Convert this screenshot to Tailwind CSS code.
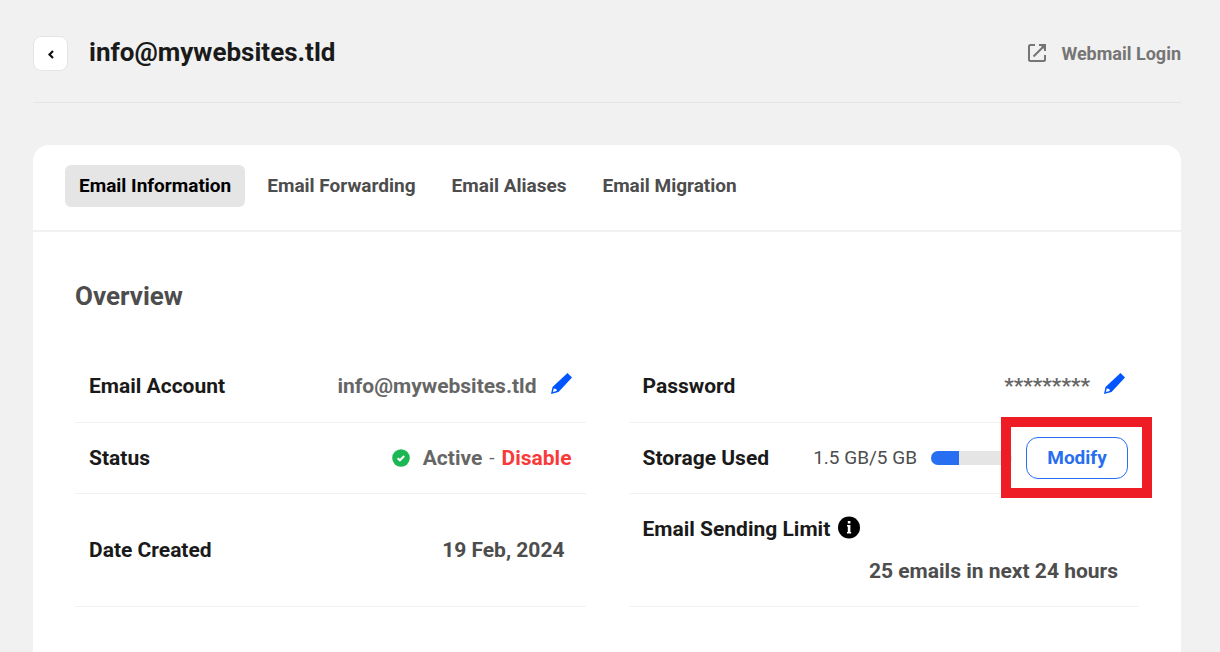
<!DOCTYPE html>
<html lang="en">
<head>
  <meta charset="UTF-8">
  <title>Email Information</title>
  <meta name="viewport" content="width=device-width, initial-scale=1.0">
  <script src="https://cdn.jsdelivr.net/npm/@tailwindcss/browser@4"></script>
</head>
<body class="bg-[#f1f1f1] min-h-screen font-[Roboto,sans-serif] text-[#1a1a1a] flex flex-col pl-[33px] pr-[39px]">

  <!-- Header -->
  <header class="flex items-start justify-between pt-9 pb-[30px] border-b border-[#e5e5e5]">
    <div class="flex items-start gap-[21px]">
      <button type="button" aria-label="Back" class="w-[35px] h-[35px] rounded-lg bg-white border border-[#e5e5e5] flex items-center justify-center">
        <svg class="w-2 h-2.5" viewBox="0 0 8 10" fill="none" stroke="#111" stroke-width="2.200">
          <path d="M6 2 2.500 5.500 6 9"/>
        </svg>
      </button>
      <h1 class="text-[26px] leading-8 font-bold">info@mywebsites.tld</h1>
    </div>
    <a href="#" class="flex items-center gap-[15px] text-[18px] leading-9 font-bold text-[#757575]">
      <svg class="w-[18px] h-[18px] mb-0.5" viewBox="0 0 18 18" fill="none" stroke="currentColor" stroke-width="2">
        <path d="M7 1H2.500Q1 1 1 2.500v13Q1 17 2.500 17h13q1.500 0 1.500-1.500V11"/>
        <path d="M11 1h6v6M16.500 1.500 5.500 12.500"/>
        <path d="M12 1h5v5z" fill="currentColor" stroke="none"/>
      </svg>
      Webmail Login
    </a>
  </header>

  <!-- Card -->
  <main class="mt-[42px] grow bg-white rounded-t-2xl">
    <nav class="flex items-center gap-2 px-8 pt-5 pb-[23px] border-b-2 border-[#f1f1f1] text-[19px] leading-6 font-bold text-[#4d4d4d]">
      <a href="#" aria-current="page" class="px-[14px] py-[9px] rounded-md bg-[#e5e5e5] text-black">Email Information</a>
      <a href="#" class="px-[14px] py-[9px]">Email Forwarding</a>
      <a href="#" class="px-[14px] py-[9px]">Email Aliases</a>
      <a href="#" class="px-[14px] py-[9px]">Email Migration</a>
    </nav>

    <section class="px-[42px] pt-12">
      <h2 class="text-[26px] leading-8 font-bold text-[#4d4d4d] mb-10">Overview</h2>

      <div class="grid grid-cols-2 gap-x-[43px] text-[21px] leading-7 font-bold">
        <div class="h-[71px] px-[14px] pb-0.5 flex items-center justify-between border-b border-[#f1f1f1]">
          <span>Email Account</span>
          <div class="flex items-start gap-[14px] text-[#666]">
            <span>info@mywebsites.tld</span>
            <button type="button" aria-label="Edit email account">
              <svg class="w-[21px] h-[22px]" viewBox="0 0 21 22" fill="#0055ff">
                <path fill-rule="evenodd" d="M16.500 1 21 5.500 7.500 20 0 22 1.500 15ZM2.800 16.200 1.900 20 5.700 19 5.400 17 3.600 16.800Z"/>
              </svg>
            </button>
          </div>
        </div>

        <div class="h-[71px] px-[14px] pb-0.5 flex items-center justify-between border-b border-[#f1f1f1]">
          <span>Password</span>
          <div class="flex items-start gap-[14px] text-[#666]">
            <span>*********</span>
            <button type="button" aria-label="Edit password">
              <svg class="w-[21px] h-[22px]" viewBox="0 0 21 22" fill="#0055ff">
                <path fill-rule="evenodd" d="M16.500 1 21 5.500 7.500 20 0 22 1.500 15ZM2.800 16.200 1.900 20 5.700 19 5.400 17 3.600 16.800Z"/>
              </svg>
            </button>
          </div>
        </div>

        <div class="h-[71px] px-[14px] flex items-center justify-between border-b border-[#f1f1f1]">
          <span>Status</span>
          <div class="flex items-center text-[#666]">
            <svg class="w-[18px] h-[18px] mr-[13px]" viewBox="0 0 18 18">
              <circle cx="9" cy="9" r="8.800" fill="#1bb755"/>
              <path d="M5.600 9.300 7.900 11.300 12.200 7" fill="none" stroke="#fff" stroke-width="2"/>
            </svg>
            <span>Active</span>
            <span class="mx-[7px] text-[19px] font-normal">-</span>
            <button type="button" class="text-[#f93a3a]">Disable</button>
          </div>
        </div>

        <div class="h-[71px] pl-[14px] pr-[11px] flex items-center justify-between border-b border-[#f1f1f1]">
          <span>Storage Used</span>
          <div class="flex items-center gap-[14px]">
            <span class="text-[19px] font-normal text-[#4d4d4d]">1.5 GB/5 GB</span>
            <div role="progressbar" aria-valuenow="1.5" aria-valuemax="5" aria-label="Storage used" class="w-[81px] h-[14px] rounded-full bg-[#e5e5e5] overflow-hidden">
              <div class="h-full bg-[#276ef1]" style="width: 35%"></div>
            </div>
            <div class="relative">
              <button type="button" class="block w-[102px] h-[42px] rounded-xl border border-[#276ef1] bg-white text-[19px] text-[#276ef1]">Modify</button>
              <!-- highlight frame -->
              <span class="absolute -left-[25px] -right-6 -top-5 -bottom-[19px] border-10 border-[#ee1c25] pointer-events-none"></span>
            </div>
          </div>
        </div>

        <div class="h-[113px] px-[14px] flex items-center justify-between border-b border-[#f1f1f1]">
          <span>Date Created</span>
          <span class="pr-[7px] text-[#4d4d4d]">19 Feb, 2024</span>
        </div>

        <div class="h-[113px] px-[14px] flex flex-col justify-center gap-[14px] border-b border-[#f1f1f1]">
          <div class="flex items-start gap-2">
            <span>Email Sending Limit</span>
            <svg class="w-[22px] h-6" viewBox="0 0 22 24">
              <circle cx="11" cy="12.500" r="11" fill="#000"/>
              <path d="M9.800 6h2.600v2.500H9.800zM9 10h3.400v7h.8v1.500H9V17h.8v-5.500H9z" fill="#fff"/>
            </svg>
          </div>
          <span class="self-end pr-[7px] text-[#4d4d4d]">25 emails in next 24 hours</span>
        </div>
      </div>
    </section>
  </main>

</body>
</html>
